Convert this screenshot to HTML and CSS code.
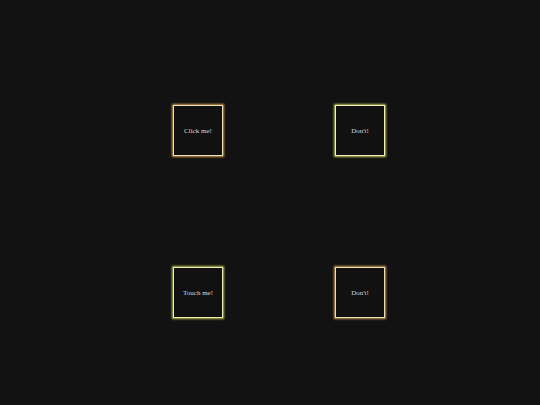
FILE: index.html
```html
<!DOCTYPE html>
<html>
<head>
<meta charset="utf-8">
<link rel="stylesheet" href="styles.css">
</head>
<body>
<div class="grid">
  <div class="box gold">Click me!</div>
  <div class="box lime">Don't!</div>
  <div class="box lime2">Touch me!</div>
  <div class="box tan">Don't!</div>
</div>
</body>
</html>
```
FILE: styles.css
```css
html, body {
  margin: 0;
  padding: 0;
  background: #121212;
  width: 540px;
  height: 405px;
  overflow: hidden;
}
.grid {
  display: grid;
  grid-template-columns: 50px 50px;
  grid-auto-rows: 50px;
  column-gap: 112px;
  row-gap: 112px;
  padding: 105px 0 0 173px;
}
.box {
  box-sizing: border-box;
  width: 50px;
  height: 51px;
  display: flex;
  align-items: center;
  justify-content: center;
  font-family: "Liberation Serif", serif;
  font-size: 7px;
  color: #d8d8d8;
  background: #111111;
}
.gold {
  border: 1.5px solid #efe0bd;
  box-shadow: 0 0 2px 1px #c99a4a;
}
.lime {
  border: 1.5px solid #f0f0b8;
  box-shadow: 0 0 2px 1px #b8c25a;
}
.lime2 {
  border: 1.5px solid #eeeeb4;
  box-shadow: 0 0 2px 1px #b5bd55;
}
.tan {
  border: 1.5px solid #f0dcb8;
  box-shadow: 0 0 2px 1px #c89a55;
}
```
